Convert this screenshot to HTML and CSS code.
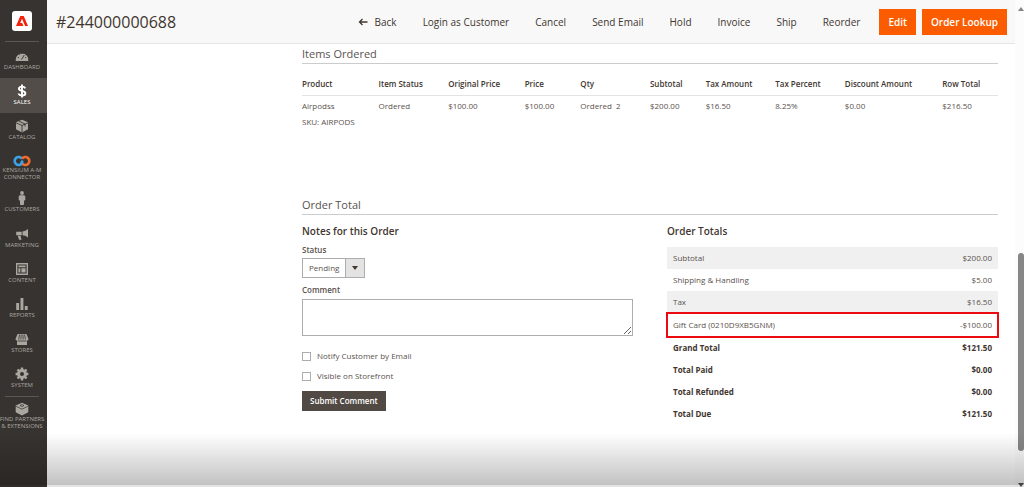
FILE: index.html
```html
<!DOCTYPE html>
<html lang="en">
<head>
<meta charset="utf-8">
<title>#244000000688</title>
<link rel="stylesheet" href="styles.css">
</head>
<body>
<div class="app">
  <nav class="menu" aria-label="Admin">
    <a class="logo" href="#" aria-label="Home"><svg width="20" height="20" viewBox="0 0 20 20"><rect width="20" height="20" rx="3" fill="#fff"/><path d="M4 15 8.300 5h3.400L16 15h-2.900L10 7.800 8.200 12h2l1.200 3z" fill="#f5220b"/></svg></a>
    <a class="item" href="#"><svg viewBox="0 0 14 14"><path d="M.8 12a6.300 6.300 0 1 1 12.400 0z"/><path d="m6.500 10.500 2.800-4.500M2.800 8.500h1.200M4.300 5.300l.8.800M7 3.800v1.200M11.200 8.500h-1" stroke="#373330" stroke-width=".9"/></svg><span>DASHBOARD</span></a>
    <a class="item active" href="#"><svg viewBox="0 0 14 14"><path d="M10.300 4.300C9.700 3 8.600 2.600 7 2.600c-2 0-3.100.8-3.100 2.100C3.900 7.500 10.400 6.200 10.400 9.200c0 1.500-1.300 2.300-3.400 2.300-1.800 0-3-.6-3.600-2M7 .5v13" fill="none" stroke="#fff" stroke-width="1.900"/></svg><span>SALES</span></a>
    <a class="item" href="#"><svg viewBox="0 0 14 14"><path d="m7 .8 6 2.500v7L7 13.400 1 10.300v-7z"/><path d="m1 3.800 6 2.700 6-2.700M7 6.500v7M4 2.200l6 2.800v2.500" fill="none" stroke="#373330" stroke-width=".9"/></svg><span>CATALOG</span></a>
    <a class="item connector" href="#"><svg viewBox="0 0 18 12"><g fill="none" stroke-width="2.600"><path d="M9 8.200A4 4 0 1 1 9 3.800" stroke="#3ba4e8"/><path d="M9 3.800a4 4 0 1 1 0 4.400" stroke="#f26b2c"/><path d="M7 9.500C9 9 9 7 9.300 5.500" stroke="#3ba4e8"/></g></svg><span>KENSIUM A-M<br>CONNECTOR</span></a>
    <a class="item" href="#"><svg viewBox="0 0 14 14"><circle cx="7" cy="2" r="1.900"/><path d="M5 4.300h4q1.300 0 1.300 1.500v3.400H9.200L8.800 14H5.200l-.4-4.800H3.700V5.800q0-1.500 1.300-1.500z"/></svg><span>CUSTOMERS</span></a>
    <a class="item" href="#"><svg viewBox="0 0 14 14"><path d="M13 2v8.500Q10.500 8.300 7.500 8.200V4.600Q10.500 4.400 13 2zM1.200 4.700H6.700v3.500H1.200zM2.800 8.700h2.600l1.200 4H4z"/></svg><span>MARKETING</span></a>
    <a class="item" href="#"><svg viewBox="0 0 14 14"><path fill-rule="evenodd" d="M1 1h12v12H1zm1.400 1.400v9.200h9.200V2.400z"/><path d="M3.400 3.400h7.200v1.800H3.400zM3.400 6.200h2v4.400h-2zM6.400 6.200h4.200v4.400H6.400z"/></svg><span>CONTENT</span></a>
    <a class="item" href="#"><svg viewBox="0 0 14 14"><path d="M1.200 6h2.900v7H1.200zM5.500 1h2.900v12H5.500zM9.800 9h2.900v4H9.800z"/></svg><span>REPORTS</span></a>
    <a class="item" href="#"><svg viewBox="0 0 14 14"><path d="M2.500 2h9L13.500 7q0 1.500-1.500 1.500V13H2V8.500Q.5 8.500.5 7z"/><path d="M4.500 2.500 3.700 7.500M6.200 2.500 5.900 7.500M7.900 2.500 8.200 7.500M9.600 2.500l.8 5M2.500 9h9" stroke="#373330" stroke-width=".8"/></svg><span>STORES</span></a>
    <a class="item" href="#"><svg viewBox="0 0 14 14"><circle cx="7" cy="7" r="3.500" fill="none" stroke="#aaa6a0" stroke-width="3"/><path d="M7 .6v2.400M7 11v2.400M.6 7H3M11 7h2.400M2.500 2.500l1.600 1.600M9.900 9.900l1.600 1.600M2.500 11.500l1.600-1.600M9.900 4.100l1.600-1.600" stroke="#aaa6a0" stroke-width="2.400"/></svg><span>SYSTEM</span></a>
    <a class="item partners" href="#"><svg viewBox="0 0 14 14"><path d="m7 .8 6.300 2.700v6.800L7 13.400.7 10.300V3.500z"/><path d="m.9 4.200 6.100 3 6.100-3M5 3.500l2-.9 2 .9-2 1z" fill="none" stroke="#373330" stroke-width=".7"/></svg><span>FIND PARTNERS<br>&amp; EXTENSIONS</span></a>
  </nav>

  <div class="page">
    <header class="bar">
      <h1>#244000000688</h1>
      <div class="actions">
        <button type="button" class="back"><svg width="10" height="8" viewBox="0 0 10 8"><path d="M9.500 4H1.500M4.500 1l-3 3 3 3" fill="none" stroke="#41362f" stroke-width="1.300"/></svg>Back</button>
        <button type="button">Login as Customer</button>
        <button type="button">Cancel</button>
        <button type="button">Send Email</button>
        <button type="button">Hold</button>
        <button type="button">Invoice</button>
        <button type="button">Ship</button>
        <button type="button">Reorder</button>
        <button type="button" class="primary">Edit</button>
        <button type="button" class="primary">Order Lookup</button>
      </div>
    </header>

    <main class="content">
      <section class="items">
        <h2>Items Ordered</h2>
        <table class="grid">
          <colgroup><col class="c-product"><col class="c-status"><col class="c-original"><col class="c-price"><col class="c-qty"><col class="c-subtotal"><col class="c-tax"><col class="c-percent"><col class="c-discount"><col></colgroup>
          <thead><tr><th>Product</th><th>Item Status</th><th>Original Price</th><th>Price</th><th>Qty</th><th>Subtotal</th><th>Tax Amount</th><th>Tax Percent</th><th>Discount Amount</th><th>Row Total</th></tr></thead>
          <tbody><tr><td>Airpodss<div class="sku">SKU: AIRPODS</div></td><td>Ordered</td><td>$100.00</td><td>$100.00</td><td>Ordered&nbsp; 2</td><td>$200.00</td><td>$16.50</td><td>8.25%</td><td>$0.00</td><td>$216.50</td></tr></tbody>
        </table>
      </section>

      <section>
        <h2>Order Total</h2>
        <div class="columns">
          <form class="notes">
            <h3>Notes for this Order</h3>
            <label class="name" for="status">Status</label>
            <div class="select"><select id="status"><option>Pending</option></select></div>
            <label class="name" for="comment">Comment</label>
            <textarea id="comment"></textarea>
            <label class="check"><input type="checkbox">Notify Customer by Email</label>
            <label class="check"><input type="checkbox">Visible on Storefront</label>
            <button type="button" class="submit">Submit Comment</button>
          </form>
          <div class="totals">
            <h3>Order Totals</h3>
            <table>
              <tbody>
                <tr class="shade"><td>Subtotal</td><td>$200.00</td></tr>
                <tr><td>Shipping &amp; Handling</td><td>$5.00</td></tr>
                <tr class="shade"><td>Tax</td><td>$16.50</td></tr>
                <tr class="marked"><td>Gift Card (0210D9XB5GNM)</td><td>-$100.00</td></tr>
                <tr class="strong"><td>Grand Total</td><td>$121.50</td></tr>
                <tr class="strong"><td>Total Paid</td><td>$0.00</td></tr>
                <tr class="strong"><td>Total Refunded</td><td>$0.00</td></tr>
                <tr class="strong"><td>Total Due</td><td>$121.50</td></tr>
              </tbody>
            </table>
          </div>
        </div>
      </section>
    </main>
  </div>

  <div class="scroll">
    <svg width="6" height="4" viewBox="0 0 6 4"><path d="M0 4 3 0l3 4z" fill="#858585"/></svg>
    <div class="track"><div class="thumb"></div></div>
    <svg width="6" height="4" viewBox="0 0 6 4"><path d="m0 0 3 4 3-4z" fill="#555"/></svg>
  </div>
  <div class="shadow"></div>
</div>
</body>
</html>
```
FILE: styles.css
```css
* { box-sizing: border-box; }
body {
  margin: 0;
  background: #fff;
  color: #5a524d;
  font: 8px/16px "Open Sans", "Noto Sans", sans-serif;
}
button, select, textarea { font: inherit; color: inherit; }
h1, h2, h3 { margin: 0; font-weight: 400; }
table { width: 100%; border-collapse: collapse; }
th, td { padding: 0; text-align: left; vertical-align: top; }

.app { display: flex; position: relative; min-height: 100vh; overflow: hidden; }

/* Side menu */
.menu { width: 47px; flex: none; padding-right: 3px; background: #373330; }
.logo { display: flex; justify-content: center; height: 42px; padding-top: 11px; margin: 0 5px; border-bottom: 1px solid #5c5752; }
.item {
  display: flex; flex-direction: column; align-items: center;
  height: 35px; padding-top: 6px;
  color: #aaa6a0; font-size: 6px; line-height: 8px;
  text-align: center; text-decoration: none;
}
.logo + .item { height: 36px; padding-top: 7px; }
.item svg { width: 14px; height: 14px; flex: none; fill: #aaa6a0; }
.item span { white-space: nowrap; }
.active { margin-right: -3px; padding-right: 3px; background: #524d49; color: #fff; }
.item:nth-child(n+5) { padding-top: 7px; height: 36px; }
.item:nth-child(n+6) { height: 35px; }
.item:nth-child(n+7) { padding-top: 8px; }
.connector svg { width: 18px; height: 12px; }
.item.connector { line-height: 7px; }
.partners { position: relative; }
.partners::before { content: ""; position: absolute; top: 2px; left: 5px; right: 5px; border-top: 1px solid #5c5752; }
.item.partners { height: 44px; line-height: 7px; }

/* Page bar */
.page { flex: 1; min-width: 0; }
.bar {
  display: flex; align-items: center; justify-content: space-between;
  height: 44px; padding: 0 8px 0 9px;
  background: #f8f8f8; border-bottom: 1px solid #e5e5e5;
}
.bar h1 { font-size: 16px; line-height: 24px; color: #41362f; }
.actions { display: flex; align-items: center; }
.actions button {
  height: 26px; padding: 0 13px; border: 0; background: none;
  color: #41362f; font-size: 10px; font-weight: 500; white-space: nowrap;
}
.back { display: flex; align-items: center; gap: 7px; }
.actions .primary { background: #fb5c00; color: #fff; padding: 0 9px; margin-left: 6px; font-weight: 600; }

/* Content */
.content { padding: 0 17px 0 255px; }
h2 { padding: 1px 0; font-size: 11px; line-height: 17px; border-bottom: 1px solid #ccc; }
h3 { font-size: 10px; line-height: 14px; font-weight: 600; color: #41362f; }
.items { min-height: 151px; }
.grid { table-layout: fixed; }
.grid th { padding: 12px 0 3px; font-size: 8px; font-weight: 600; color: #41362f; border-bottom: 1px solid #e3e3e3; white-space: nowrap; }
.grid td { padding-top: 2px; white-space: nowrap; }
.c-product { width: 11%; }
.c-status { width: 10%; }
.c-original { width: 11%; }
.c-price { width: 8%; }
.c-qty { width: 10%; }
.c-subtotal { width: 8%; }
.c-tax { width: 10%; }
.c-percent { width: 10%; }
.c-discount { width: 14%; }

.columns { display: grid; grid-template-columns: 1fr 1fr; gap: 34px; padding-top: 9px; }
.notes { display: flex; flex-direction: column; align-items: flex-start; }
.name { margin-top: 4px; font-weight: 600; }
.select { position: relative; }
.select::after {
  content: ""; position: absolute; right: 7px; top: 8px; pointer-events: none;
  border: 3px solid transparent; border-top: 4px solid #41362f; border-bottom: 0;
}
select {
  appearance: none; display: block; width: 63px; height: 20px; padding: 0 6px;
  border: 1px solid #adadad; border-radius: 0;
  background: linear-gradient(to left, #e3e3e3 18px, #adadad 18px, #adadad 19px, #fff 19px);
}
textarea { display: block; width: 100%; height: 37px; margin: 1px 0 12px; border: 1px solid #adadad; resize: vertical; background: #fff; }
.check { display: flex; align-items: center; gap: 6px; margin-bottom: 4px; }
.check input { appearance: none; width: 9px; height: 9px; margin: 0; border: 1px solid #adadad; background: #fff; }
.submit { height: 20px; margin-top: 3px; padding: 0 8px; border: 0; background: #514943; color: #fff; font-weight: 600; }

.totals h3 { margin-bottom: 9px; }
.totals td { height: 22px; padding: 3px 6px; }
.totals td:last-child { text-align: right; }
.shade { background: #f0f0f0; }
.totals .marked td { height: 24px; padding-top: 4px; }
.marked { outline: 2px solid #ea0a10; outline-offset: -1px; }
.strong { font-weight: 700; color: #41362f; }

/* Scroll bar */
.scroll { width: 9px; flex: none; display: flex; flex-direction: column; align-items: center; padding: 7px 0 0 2px; background: #fcfcfc; }
.track { flex: 1; width: 6px; }
.thumb { height: 42%; margin-top: 242px; border-radius: 3px; background: #878787; }

.shadow {
  position: absolute; left: 0; right: 0; bottom: 0; height: 54px; pointer-events: none;
  background: linear-gradient(rgba(0, 0, 0, 0), rgba(0, 0, 0, .24));
  border-bottom: 2px solid rgba(0, 0, 0, .1);
}
```
